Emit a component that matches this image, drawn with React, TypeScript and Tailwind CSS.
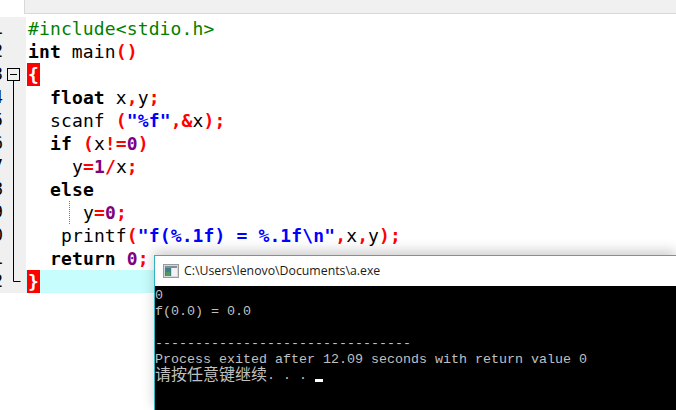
const mono = { fontFamily: '"DejaVu Sans Mono", monospace' };

type Tok = [string, "k" | "v" | "p" | "s" | "n" | "i"];

const tokenClass: Record<string, string> = {
  k: "font-bold text-black",
  v: "text-black",
  p: "font-bold text-[#ff0000]",
  s: "font-bold text-[#0000ff]",
  n: "font-bold text-[#800080]",
  i: "text-[#008000]",
};

const lines: { indent: number; toks: Tok[] }[] = [
  { indent: 1, toks: [["#include<stdio.h>", "i"]] },
  { indent: 1, toks: [["int", "k"], [" main", "v"], ["()", "p"]] },
  { indent: 1, toks: [] },
  { indent: 23, toks: [["float", "k"], [" x", "v"], [",", "p"], ["y", "v"], [";", "p"]] },
  { indent: 23, toks: [["scanf ", "v"], ["(", "p"], ['"%f"', "s"], [",&", "p"], ["x", "v"], [");", "p"]] },
  { indent: 23, toks: [["if", "k"], [" ", "v"], ["(", "p"], ["x", "v"], ["!=", "p"], ["0", "n"], [")", "p"]] },
  { indent: 45, toks: [["y", "v"], ["=", "p"], ["1", "n"], ["/", "p"], ["x", "v"], [";", "p"]] },
  { indent: 23, toks: [["else", "k"]] },
  { indent: 56, toks: [["y", "v"], ["=", "p"], ["0", "n"], [";", "p"]] },
  { indent: 34, toks: [["printf", "v"], ["(", "p"], ['"f(%.1f) = %.1f\\n"', "s"], [",", "p"], ["x", "v"], [",", "p"], ["y", "v"], [");", "p"]] },
  { indent: 23, toks: [["return", "k"], [" ", "v"], ["0", "n"], [";", "p"]] },
  { indent: 1, toks: [] },
];

function FoldMark({ row }: { row: number }) {
  return (
    <svg width="19" height="23" className="shrink-0">
      {row === 3 && (
        <>
          <rect x="0.5" y="5.5" width="12" height="12" fill="#f0f0f0" stroke="#000" />
          <path d="M3 11.5h7" stroke="#000" />
          <path d="M6.5 18v5" stroke="#000" />
        </>
      )}
      {row > 3 && row < 12 && <path d="M6.5 0v23" stroke="#000" />}
      {row === 12 && <path d="M6.5 0v11.5h7" stroke="#000" fill="none" />}
    </svg>
  );
}

function CodeRow({ n }: { n: number }) {
  const line = lines[n - 1];
  return (
    <div className="flex h-[23px]">
      <div className="flex w-[26px] shrink-0 bg-[#f0f0f0]">
        {/* line numbers are scrolled almost out of view in the editor */}
        <div className="mr-[4px] flex h-[23px] w-[3px] shrink-0 justify-end overflow-hidden text-[17px] leading-[23px] text-black" style={mono}>
          <span className="shrink-0">{n % 10}</span>
        </div>
        <FoldMark row={n} />
      </div>
      <div className={`relative flex min-w-0 flex-1 pl-[1px] ${n === 12 ? "bg-[#c8fdfd]" : ""}`}>
        {n === 3 || n === 12 ? (
          <span className="h-[23px] w-[13px] bg-[#ff0000] pl-[1px] text-[18px] font-bold leading-[23px] text-white" style={mono}>
            {n === 3 ? "{" : "}"}
          </span>
        ) : (
          <span className="whitespace-pre text-[18px] leading-[23px] tracking-[0.13px]" style={{ ...mono, paddingLeft: line.indent }}>
            {line.toks.map(([text, kind], i) => (
              <span key={i} className={tokenClass[kind]}>
                {text}
              </span>
            ))}
          </span>
        )}
        {n === 9 && <div className="absolute bottom-0 left-[43px] top-0 border-l border-dotted border-[#777]" />}
      </div>
    </div>
  );
}

function ConsoleIcon() {
  return (
    <svg width="16" height="16" viewBox="0 0 16 16" className="shrink-0">
      <rect x="0.5" y="1.5" width="15" height="13" fill="#d8d8d8" stroke="#9a9a9a" />
      <rect x="2" y="3" width="12" height="2" fill="#7f8fa0" />
      <rect x="2" y="5" width="6" height="8" fill="#3f7f88" />
      <rect x="3" y="9" width="4" height="4" fill="#4f9a5c" />
      <rect x="9" y="5" width="5" height="8" fill="#f2f2f2" />
    </svg>
  );
}

function ConsoleWindow() {
  return (
    <div className="absolute bottom-0 left-[154px] right-0 top-[255px] flex flex-col border-l border-t border-[#2fb3c0] shadow-[0_-4px_12px_rgba(0,0,0,0.2)]">
      <div className="flex h-[30px] shrink-0 items-center gap-[5px] bg-white pl-[8px]">
        <ConsoleIcon />
        <span className="text-[12.3px] text-[#1a1a1a]" style={{ fontFamily: '"Open Sans", sans-serif' }}>
          C:\Users\lenovo\Documents\a.exe
        </span>
      </div>
      <div
        className="flex-1 whitespace-pre bg-black pt-[2px] text-[13.33px] leading-[16px] text-[#c0c0c0]"
        style={{ fontFamily: '"Liberation Mono", "Noto Sans CJK SC", monospace' }}
      >
        <div>0</div>
        <div>f(0.0) = 0.0</div>
        <div> </div>
        <div>--------------------------------</div>
        <div>Process exited after 12.09 seconds with return value 0</div>
        <div className="flex items-center">
          <span className="text-[16px]">请按任意键继续</span>
          <span>. . . </span>
          <span className="mt-[8px] h-[3px] w-[8px] bg-white" />
        </div>
      </div>
    </div>
  );
}

export default function App() {
  return (
    <div className="relative h-[410px] w-[676px] overflow-hidden bg-white">
      <div className="ml-[24px] h-[14px] border-b border-l border-[#d8d8d8] bg-[#f0f0f0]" />
      <div className="h-[3px]" />
      {lines.map((_, i) => (
        <CodeRow key={i} n={i + 1} />
      ))}
      <ConsoleWindow />
    </div>
  );
}
